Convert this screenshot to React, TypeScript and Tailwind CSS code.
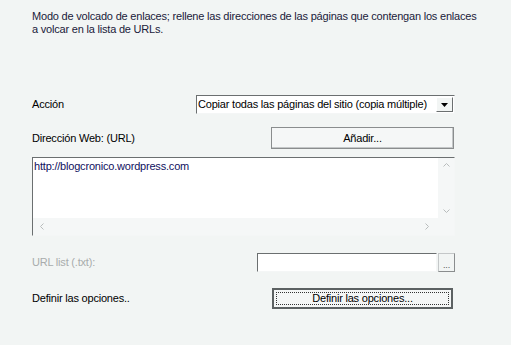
import React from 'react';

const font = { fontFamily: '"Liberation Sans", Arial, sans-serif' };

const Sunken: React.FC<{ className?: string; children?: React.ReactNode }> = ({ className = '', children }) => (
  <div className={`border-t border-l border-t-[#6b6f70] border-l-[#6b6f70] border-r border-b border-r-[#f4f6f6] border-b-[#f4f6f6] ${className}`}>
    {children}
  </div>
);

const App: React.FC = () => {
  return (
    <div className="w-[511px] h-[345px] bg-[#f2f5f4] text-[11px] leading-[13px] tracking-[-0.2px] text-black pl-[32px] pt-[10px] overflow-hidden" style={font}>
      <p className="w-[448px] text-[#1a1a3a]">
        Modo de volcado de enlaces; rellene las direcciones de las páginas que contengan los enlaces a volcar en la lista de URLs.
      </p>

      <div className="flex items-center mt-[59px] h-[19px]">
        <span className="w-[164px]">Acción</span>
        <Sunken className="w-[259px] h-[19px] bg-white flex items-center">
          <span className="flex-1 pl-[1px] whitespace-nowrap">Copiar todas las páginas del sitio (copia múltiple)</span>
          <div className="w-[17px] h-[15px] mr-[1px] bg-[#f2f5f4] border border-r-[#6b6f70] border-b-[#6b6f70] border-t-white border-l-white flex items-center justify-center">
            <svg width="7" height="4" viewBox="0 0 7 4"><path d="M0 0h7L3.5 4z" fill="#000" /></svg>
          </div>
        </Sunken>
      </div>

      <div className="flex items-center mt-[13px] h-[22px]">
        <span className="w-[239px]">Dirección Web: (URL)</span>
        <div className="w-[183px] h-[22px] border border-[#8a8d8e] bg-[#f5f7f7] flex items-center justify-center shadow-[inset_-1px_-1px_0_#c4c7c8]">
          Añadir...
        </div>
      </div>

      <Sunken className="mt-[8px] w-[423px] h-[79px] bg-[#f5f7f7] flex flex-col">
        <div className="flex flex-1">
          <div className="flex-1 bg-white pl-[1px] pt-[2px] text-[#101060]">http://blogcronico.wordpress.com</div>
          <div className="w-[16px] flex flex-col items-center justify-between py-[4px]">
            <svg width="7" height="5" viewBox="0 0 7 5"><path d="M0.5 4.5L3.5 1.5L6.5 4.5" stroke="#b8bcbc" fill="none" /></svg>
            <svg width="7" height="5" viewBox="0 0 7 5"><path d="M0.5 0.5L3.5 3.5L6.5 0.5" stroke="#b8bcbc" fill="none" /></svg>
          </div>
        </div>
        <div className="h-[17px] flex items-center justify-between pl-[6px] pr-[24px]">
          <svg width="5" height="7" viewBox="0 0 5 7"><path d="M4.5 0.5L1.5 3.5L4.5 6.5" stroke="#b8bcbc" fill="none" /></svg>
          <svg width="5" height="7" viewBox="0 0 5 7"><path d="M0.5 0.5L3.5 3.5L0.5 6.5" stroke="#b8bcbc" fill="none" /></svg>
        </div>
      </Sunken>

      <div className="flex items-center mt-[17px] h-[19px]">
        <span className="w-[225px] text-[#a8acac]">URL list (.txt):</span>
        <Sunken className="w-[180px] h-[19px] bg-white" />
        <div className="w-[17px] h-[19px] ml-[1px] border border-[#c4c7c8] border-r-[#8a8d8e] border-b-[#8a8d8e] flex items-end justify-center text-[9px] leading-[12px] text-[#555]">...</div>
      </div>

      <div className="flex items-center mt-[16px] h-[21px]">
        <span className="w-[240px]">Definir las opciones..</span>
        <div className="w-[181px] h-[21px] border-2 border-[#5c6162] bg-[#f4f6f6] p-[2px]">
          <div className="w-full h-full border border-dotted border-[#333] flex items-center justify-center">
            Definir las opciones...
          </div>
        </div>
      </div>
    </div>
  );
};

export default App;
